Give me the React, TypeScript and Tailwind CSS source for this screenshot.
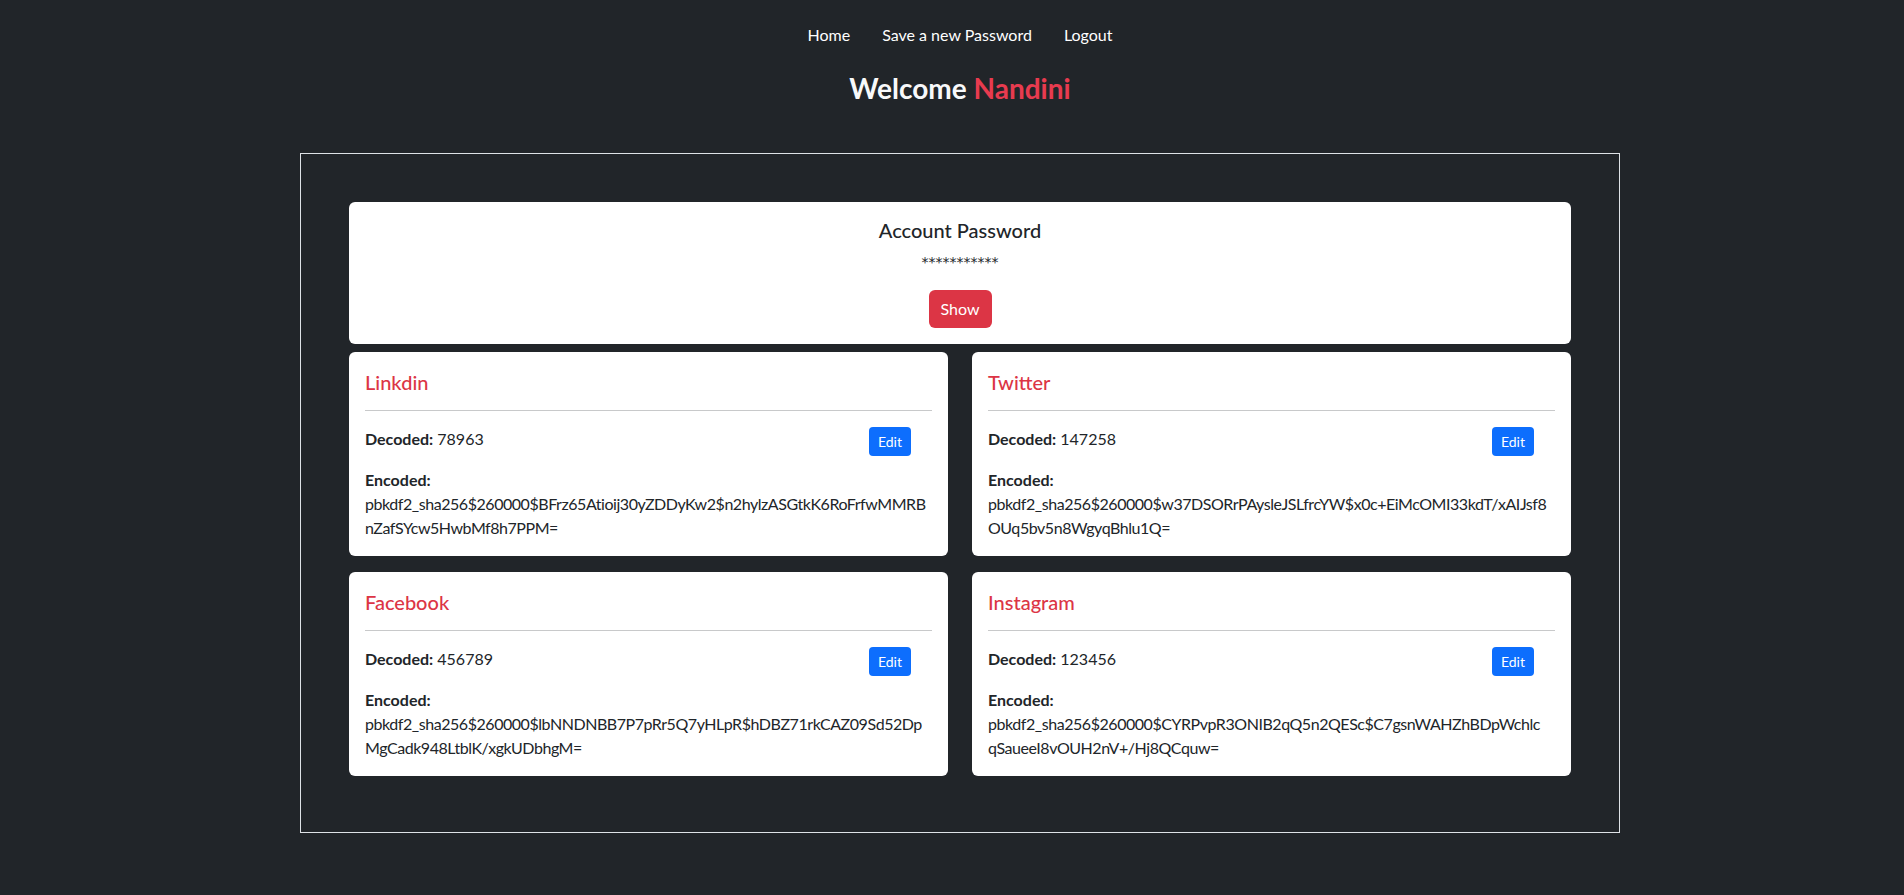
import React from 'react';

interface Entry {
  site: string;
  decoded: string;
  encoded: [string, string];
}

const entries: Entry[] = [
  {
    site: 'Linkdin',
    decoded: '78963',
    encoded: ['pbkdf2_sha256$260000$BFrz65Atioij30yZDDyKw2$n2hylzASGtkK6RoFrfwMMRB', 'nZafSYcw5HwbMf8h7PPM='],
  },
  {
    site: 'Twitter',
    decoded: '147258',
    encoded: ['pbkdf2_sha256$260000$w37DSORrPAysleJSLfrcYW$x0c+EiMcOMI33kdT/xAIJsf8', 'OUq5bv5n8WgyqBhlu1Q='],
  },
  {
    site: 'Facebook',
    decoded: '456789',
    encoded: ['pbkdf2_sha256$260000$lbNNDNBB7P7pRr5Q7yHLpR$hDBZ71rkCAZ09Sd52Dp', 'MgCadk948LtblK/xgkUDbhgM='],
  },
  {
    site: 'Instagram',
    decoded: '123456',
    encoded: ['pbkdf2_sha256$260000$CYRPvpR3ONIB2qQ5n2QESc$C7gsnWAHZhBDpWchlc', 'qSaueeI8vOUH2nV+/Hj8QCquw='],
  },
];

function PasswordCard({ entry }: { entry: Entry }) {
  return (
    <div className="bg-white rounded-md px-4 pt-[18px] pb-[16px] text-[#212529]">
      <h5 className="text-[20px] leading-6 font-medium text-[#dc3545]">{entry.site}</h5>
      <hr className="my-4 border-t border-[#c8c9ca]" />
      <div className="flex h-6 items-start justify-between">
        <p className="leading-6">
          <b>Decoded:</b> {entry.decoded}
        </p>
        {/* Edit button */}
        <button className="mr-[21px] rounded bg-[#0d6efd] px-[9px] py-1 text-sm leading-[21px] text-white">
          Edit
        </button>
      </div>
      <p className="mt-[17px] leading-6">
        <b>Encoded:</b>
        <br />
        <span className="whitespace-nowrap tracking-[-0.45px]">{entry.encoded[0]}</span>
        <br />
        <span className="whitespace-nowrap tracking-[-0.45px]">{entry.encoded[1]}</span>
      </p>
    </div>
  );
}

export default function App() {
  return (
    <div className="min-h-screen bg-[#212529] pl-4 pb-10 font-['Lato','Liberation_Sans',sans-serif] text-base">
      {/* Nav */}
      <nav className="flex justify-center pt-[15px]">
        <a className="px-4 py-2 leading-6 text-white">Home</a>
        <a className="px-4 py-2 leading-6 text-white">Save a new Password</a>
        <a className="px-4 py-2 leading-6 text-white">Logout</a>
      </nav>

      <h3 className="mt-[17px] text-center text-[28px] leading-[1.2] font-bold text-[#f8f9fa]">
        Welcome <span className="text-[#e83b4f]">Nandini</span>
      </h3>

      <div className="mx-auto mt-[47px] w-[1320px] border border-[#dee2e6] px-12 pt-12 pb-12">
        <div className="rounded-md bg-white p-4 text-center text-[#212529]">
          <h5 className="mb-2 text-[20px] leading-6 font-medium">Account Password</h5>
          <p className="mb-4 h-6 font-['DejaVu_Sans',sans-serif] text-[14px] leading-6">***********</p>
          <button className="h-[38px] rounded-md bg-[#dc3545] px-3 leading-6 text-white">Show</button>
        </div>

        <div className="my-2 grid grid-cols-2 gap-x-6 gap-y-4">
          {entries.map((e) => (
            <PasswordCard key={e.site} entry={e} />
          ))}
        </div>
      </div>
    </div>
  );
}
